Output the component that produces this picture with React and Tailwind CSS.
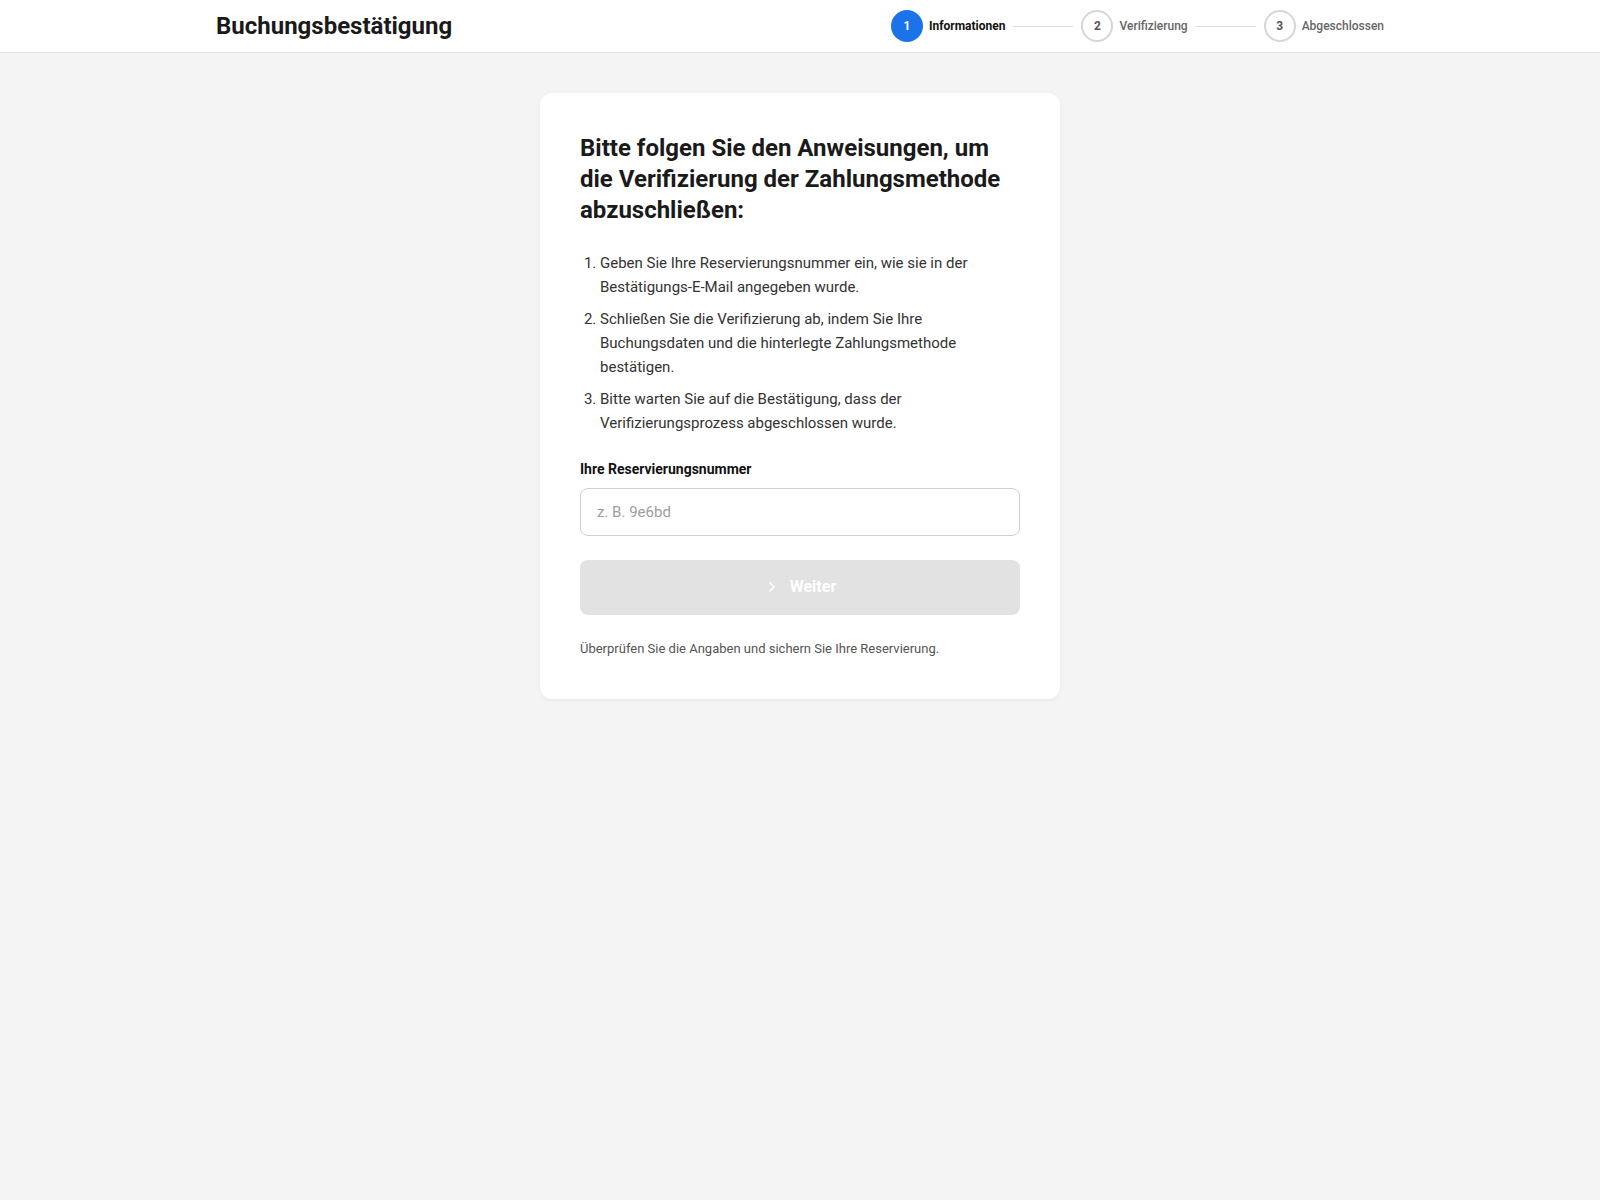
import React from 'react';
import { ChevronRight } from 'lucide-react';

const steps = [
  { n: 1, label: 'Informationen', active: true },
  { n: 2, label: 'Verifizierung' },
  { n: 3, label: 'Abgeschlossen' },
];

const Stepper = () => (
  <div className="flex items-center">
    {steps.map((s, i) => (
      <div key={s.n} className="flex items-center">
        {i > 0 && <div className="mx-2 h-px w-[60px] bg-[#dcdcdc]" />}
        <div className="flex items-center gap-1.5">
          <div
            className={`flex h-8 w-8 items-center justify-center rounded-full text-xs font-bold ${
              s.active ? 'bg-[#1a73e8] text-white' : 'border-2 border-[#d6d6d6] text-[#555]'
            }`}
          >
            {s.n}
          </div>
          <span className={`text-xs ${s.active ? 'font-bold text-[#111]' : 'font-medium text-[#666]'}`}>
            {s.label}
          </span>
        </div>
      </div>
    ))}
  </div>
);

export default function App() {
  return (
    <div className="min-h-[1200px] bg-[#f4f4f4] font-['Roboto','Liberation_Sans',sans-serif] text-[#1a1a1a]">
      <header className="border-b border-[#e3e3e3] bg-white">
        <div className="mx-auto flex h-[52px] max-w-[1200px] items-center justify-between px-4">
          <h1 className="text-2xl font-bold text-[#1a1a1a]">Buchungsbestätigung</h1>
          <Stepper />
        </div>
      </header>

      <main className="flex justify-center pt-10">
        <div className="w-[520px] rounded-xl bg-white p-10 shadow-[0_1px_4px_rgba(0,0,0,0.06)]">
          <h2 className="text-2xl font-bold leading-[1.3] text-[#1a1a1a]">
            Bitte folgen Sie den Anweisungen, um die Verifizierung der Zahlungsmethode abzuschließen:
          </h2>

          <ol className="mt-6 flex list-decimal flex-col gap-2 pl-5 text-[15px] leading-[24px] text-[#333]">
            <li>Geben Sie Ihre Reservierungsnummer ein, wie sie in der Bestätigungs-E-Mail angegeben wurde.</li>
            <li>
              Schließen Sie die Verifizierung ab, indem Sie Ihre Buchungsdaten und die hinterlegte Zahlungsmethode
              bestätigen.
            </li>
            <li>Bitte warten Sie auf die Bestätigung, dass der Verifizierungsprozess abgeschlossen wurde.</li>
          </ol>

          <label className="mt-6 block text-sm font-bold leading-5 text-[#111]">Ihre Reservierungsnummer</label>
          <input
            type="text"
            placeholder="z. B. 9e6bd"
            className="mt-[9px] h-12 w-full rounded-lg border border-[#cfcfcf] px-4 text-[15px] text-[#333] outline-none placeholder:text-[#9e9e9e]"
          />

          <button
            disabled
            className="mt-6 flex h-[55px] w-full items-center justify-center gap-2.5 rounded-lg bg-[#e2e2e2] text-base font-bold text-white"
          >
            <ChevronRight className="h-4 w-4" strokeWidth={2.5} />
            Weiter
          </button>

          <p className="mt-6 text-[13px] leading-5 text-[#555]">
            Überprüfen Sie die Angaben und sichern Sie Ihre Reservierung.
          </p>
        </div>
      </main>
    </div>
  );
}
